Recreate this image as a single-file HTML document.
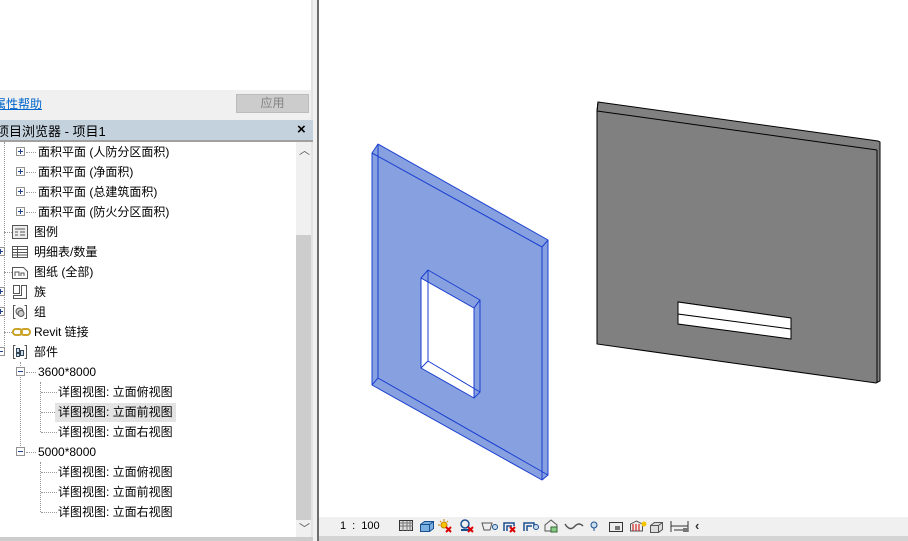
<!DOCTYPE html>
<html><head><meta charset="utf-8"><style>
*{margin:0;padding:0;box-sizing:border-box}
body{width:908px;height:541px;overflow:hidden;background:#fff;font-family:"Liberation Sans","Noto Sans CJK SC",sans-serif;font-size:12px;color:#000;position:relative}
.a{position:absolute}
.row{position:absolute;height:20px;line-height:20px;white-space:nowrap}
.pm{position:absolute;width:9px;height:9px;border:1px solid #919191;background:#fff;top:5px}
.pm:before{content:"";position:absolute;left:1px;top:3px;width:5px;height:1px;background:#1f3f8f}
.pm.p:after{content:"";position:absolute;left:3px;top:1px;width:1px;height:5px;background:#1f3f8f}
.dh{position:absolute;top:10px;border-top:1px dotted #999;height:0}
.dv{position:absolute;border-left:1px dotted #999;width:0}
.ic{position:absolute;top:2px;width:16px;height:16px}
.tb{position:absolute;top:519px;width:16px;height:14px;font-size:13px;line-height:14px;text-align:center}
</style></head><body>
<div class="a" style="left:0;top:0;width:311px;height:90px;background:#fff"></div>
<div class="a" style="left:311px;top:0;width:2px;height:541px;background:#e3e3e3"></div>
<div class="a" style="left:313px;top:0;width:4px;height:541px;background:#f0f0f0"></div>
<div class="a" style="left:317px;top:0;width:2px;height:541px;background:#6d6d6d"></div>
<div class="a" style="left:0;top:90px;width:311px;height:30px;background:#f0f0f0"></div>
<div class="a" style="left:-6px;top:95px;color:#0066cc;text-decoration:underline;font-size:12px">属性帮助</div>
<div class="a" style="left:236px;top:94px;width:73px;height:19px;background:#ccc;border:1px solid #bcbcbc;color:#838383;text-align:center;line-height:17px">应用</div>
<div class="a" style="left:0;top:120px;width:313px;height:20px;background:#c4d2de"></div>
<div class="a" style="left:-4px;top:121px;font-size:13px">项目浏览器 - 项目1</div>
<div class="a" style="left:297px;top:120px;font-size:15px;font-weight:bold;line-height:20px">×</div>
<div class="a" style="left:0;top:140px;width:313px;height:2px;background:#a0a0a0"></div>
<div class="a" style="left:296px;top:142px;width:15px;height:395px;background:#f0f0f0"></div>
<div class="a" style="left:296px;top:235px;width:15px;height:285px;background:#cdcdcd"></div>
<div class="a" style="left:299px;top:142px;color:#555;font-size:11px">︿</div>
<div class="a" style="left:299px;top:520px;color:#555;font-size:11px">﹀</div>
<div class="a" style="left:0;top:537px;width:313px;height:4px;background:#ccc"></div>
<div class="dv" style="left:4px;top:142px;height:210px"></div>
<div class="dv" style="left:20px;top:362px;height:90px"></div>
<div class="dv" style="left:40px;top:382px;height:50px"></div>
<div class="dv" style="left:40px;top:462px;height:50px"></div>
<div class="row" style="top:142px"><div class="pm p" style="left:16px"></div><div class="dh" style="left:26px;width:10px"></div><span class="a" style="left:38px">面积平面 (人防分区面积)</span></div>
<div class="row" style="top:162px"><div class="pm p" style="left:16px"></div><div class="dh" style="left:26px;width:10px"></div><span class="a" style="left:38px">面积平面 (净面积)</span></div>
<div class="row" style="top:182px"><div class="pm p" style="left:16px"></div><div class="dh" style="left:26px;width:10px"></div><span class="a" style="left:38px">面积平面 (总建筑面积)</span></div>
<div class="row" style="top:202px"><div class="pm p" style="left:16px"></div><div class="dh" style="left:26px;width:10px"></div><span class="a" style="left:38px">面积平面 (防火分区面积)</span></div>
<div class="row" style="top:222px"><div class="dh" style="left:4px;width:8px"></div>
<svg class="ic" style="left:12px" viewBox="0 0 16 16"><rect x="0.5" y="1.5" width="15" height="13" fill="#eee" stroke="#555"/><path d="M3 5h10M3 8h3M8 8h5M3 11h3M8 11h5" stroke="#555"/></svg><span class="a" style="left:34px">图例</span></div>
<div class="row" style="top:242px"><div class="pm p" style="left:-4px"></div>
<svg class="ic" style="left:12px" viewBox="0 0 16 16"><rect x="0.5" y="2.5" width="15" height="11" fill="#fff" stroke="#555"/><path d="M1 5.5h14M1 8.5h14M1 11h14M5.5 3v10" stroke="#555"/></svg><span class="a" style="left:34px">明细表/数量</span></div>
<div class="row" style="top:262px"><div class="dh" style="left:4px;width:8px"></div>
<svg class="ic" style="left:12px" viewBox="0 0 16 16"><path d="M0.5 3.5h11l4 4v7h-15z" fill="#fff" stroke="#555"/><path d="M3 12V8h4v4M9 12V9h3v3" fill="none" stroke="#555"/></svg><span class="a" style="left:34px">图纸 (全部)</span></div>
<div class="row" style="top:282px"><div class="pm p" style="left:-4px"></div>
<svg class="ic" style="left:12px" viewBox="0 0 16 16"><path d="M1.5 1.5h6v8h-6zM9.5 1.5h5v13h-13v-3h8z" fill="#fff" stroke="#555"/></svg><span class="a" style="left:34px">族</span></div>
<div class="row" style="top:302px"><div class="pm p" style="left:-4px"></div>
<svg class="ic" style="left:12px" viewBox="0 0 16 16"><path d="M3.5 1.5h-2v13h2M12.5 1.5h2v13h-2" fill="none" stroke="#555"/><circle cx="7.5" cy="7.5" r="3.5" fill="#ddd" stroke="#555"/><circle cx="9" cy="9.5" r="3" fill="#ccc" stroke="#555"/></svg><span class="a" style="left:34px">组</span></div>
<div class="row" style="top:322px"><div class="dh" style="left:4px;width:8px"></div>
<svg class="a" style="left:12px;top:6px" width="20" height="8"><rect x="1" y="1" width="9" height="6" rx="3" fill="none" stroke="#c9a227" stroke-width="2"/><rect x="9" y="1" width="9" height="6" rx="3" fill="none" stroke="#c9a227" stroke-width="2"/></svg><span class="a" style="left:34px">Revit 链接</span></div>
<div class="row" style="top:342px"><div class="pm" style="left:-4px"></div>
<svg class="ic" style="left:12px" viewBox="0 0 16 16"><path d="M3.5 1.5h-2v13h2M12.5 1.5h2v13h-2" fill="none" stroke="#555"/><path d="M4.5 4.5h3v4h-3zM8.5 6.5h3v5h-3zM4.5 9.5h3v3h-3z" fill="#cde" stroke="#345"/></svg><span class="a" style="left:34px">部件</span></div>
<div class="row" style="top:362px"><div class="pm" style="left:16px"></div><div class="dh" style="left:26px;width:10px"></div><span class="a" style="left:38px">3600*8000</span></div>
<div class="row" style="top:382px"><div class="dh" style="left:41px;width:16px"></div><span class="a" style="left:58px">详图视图: 立面俯视图</span></div>
<div class="row" style="top:402px"><div class="dh" style="left:41px;width:14px"></div><div class="a" style="left:55px;top:1px;width:121px;height:19px;background:#e3e3e3"></div><span class="a" style="left:58px">详图视图: 立面前视图</span></div>
<div class="row" style="top:422px"><div class="dh" style="left:41px;width:16px"></div><span class="a" style="left:58px">详图视图: 立面右视图</span></div>
<div class="row" style="top:442px"><div class="pm" style="left:16px"></div><div class="dh" style="left:26px;width:10px"></div><span class="a" style="left:38px">5000*8000</span></div>
<div class="row" style="top:462px"><div class="dh" style="left:41px;width:16px"></div><span class="a" style="left:58px">详图视图: 立面俯视图</span></div>
<div class="row" style="top:482px"><div class="dh" style="left:41px;width:16px"></div><span class="a" style="left:58px">详图视图: 立面前视图</span></div>
<div class="row" style="top:502px"><div class="dh" style="left:41px;width:16px"></div><span class="a" style="left:58px">详图视图: 立面右视图</span></div>
<svg class="a" style="left:0;top:0" width="908" height="541">
<g stroke="#1a3fd0" stroke-width="1" stroke-linejoin="round">
<path fill="#87a1e0" fill-rule="evenodd" d="M378 144 L548 240 L548 475 L542 480 L372 385 L372 153 Z M421 278 L474 308 L474 398 L421 368 Z"/>
<path fill="none" d="M372 153 L542 247 L548 240 M542 247 L542 480 M378 144 L378 378 L548 475 M372 385 L378 378"/>
<path fill="#87a1e0" d="M421 278 L428 270 L480 300 L474 308 Z"/>
<path fill="#87a1e0" d="M474 308 L480 300 L480 392 L474 398 Z"/>
<path fill="none" d="M428 270 L428 361 L421 368 M428 361 L480 392"/>
</g>
<g stroke="#000" stroke-width="1">
<path fill="#808080" fill-rule="evenodd" d="M598 102 L878 141 L880 142 L880 381 L876 383 L597 344 L597 111 Z M678 302 L791 318 L791 339 L678 324 Z"/>
<path fill="none" d="M597 111 L877 150 M877 150 L877 383 M598 102 L597 111"/>
<path fill="#fff" d="M678 302 L791 318 L791 329 L678 314 Z"/>
</g>
</svg>
<div class="a" style="left:319px;top:517px;width:589px;height:19px;background:#f0f0f0"></div>
<div class="a" style="left:319px;top:536px;width:589px;height:5px;background:#d4d4d4"></div>
<div class="a" style="left:340px;top:519px;font-size:11px;line-height:14px;word-spacing:3px">1 : 100</div>
<svg class="a" style="left:398px;top:518px" width="300" height="16">
<rect x="1.5" y="2.5" width="13" height="10" fill="#ddd" stroke="#333"/><path d="M2 5h13M2 8h13M5 3v10M9 3v10M12 3v10" stroke="#777"/>
<path d="M22.5 6.5l4-3h9v7l-4 3h-9z" fill="#7ab0e0" stroke="#1a4f8f"/><path d="M22.5 6.5h9v7M31.5 6.5l4-3" fill="none" stroke="#1a4f8f"/>
<circle cx="46" cy="7" r="3" fill="#f7c600" stroke="#c08000"/><path d="M46 1v2M40 7h2M42 3l1 1M50 3l-1 1" stroke="#c08000"/><path d="M48 9l5 5M53 9l-5 5" stroke="#d00" stroke-width="2"/>
<circle cx="67" cy="6" r="4" fill="none" stroke="#1a4f8f" stroke-width="1.5"/><path d="M63 12h8" stroke="#1a4f8f" stroke-width="2"/><path d="M70 9l5 5M75 9l-5 5" stroke="#d00" stroke-width="2"/>
<path d="M84 5h10l-2 7h-6z" fill="#eee" stroke="#555"/><circle cx="97" cy="9" r="2.5" fill="#cde" stroke="#1a4f8f"/>
<path d="M106 13V5h10v3M109 13V8h5" fill="none" stroke="#1a4f8f" stroke-width="1.5"/><path d="M112 9l5 5M117 9l-5 5" stroke="#d00" stroke-width="2"/>
<path d="M126 13V5h10v3M129 13V8h5" fill="none" stroke="#1a4f8f" stroke-width="1.5"/><circle cx="138" cy="9" r="2.5" fill="#cde" stroke="#1a4f8f"/>
<path d="M147 13V7l6-5 6 5v6z" fill="#eee" stroke="#555"/><rect x="153" y="9" width="6" height="5" fill="#8c8" stroke="#363"/>
<path d="M167 6q5 8 10 2q4-4 8 0" fill="none" stroke="#555" stroke-width="1.5"/>
<circle cx="196" cy="7" r="3" fill="#cde" stroke="#1a4f8f"/><path d="M196 10v3" stroke="#1a4f8f"/>
<rect x="211.5" y="4.5" width="13" height="9" fill="#eee" stroke="#333"/><rect x="217" y="8" width="5" height="4" fill="#777"/>
<path d="M232.5 13V6l6-3 6 3v7z" fill="#eee" stroke="#555"/><path d="M235 6v7M238 6v7M241 6v7" stroke="#c00"/><circle cx="246" cy="6" r="2.5" fill="#f7c600"/>
<path d="M252.5 7.5l4-3h8v7l-4 3h-8z" fill="#ddd" stroke="#555"/><path d="M252.5 7.5h8v7M260.5 7.5l4-3" fill="none" stroke="#555"/>
<path d="M273 3v11M290 3v11M273 8h17M276 12h10" stroke="#333"/><rect x="285" y="10" width="5" height="4" fill="#777"/>
</svg>
<div class="a" style="left:695px;top:518px;font-size:13px;font-weight:bold;color:#333">‹</div>
</body></html>
